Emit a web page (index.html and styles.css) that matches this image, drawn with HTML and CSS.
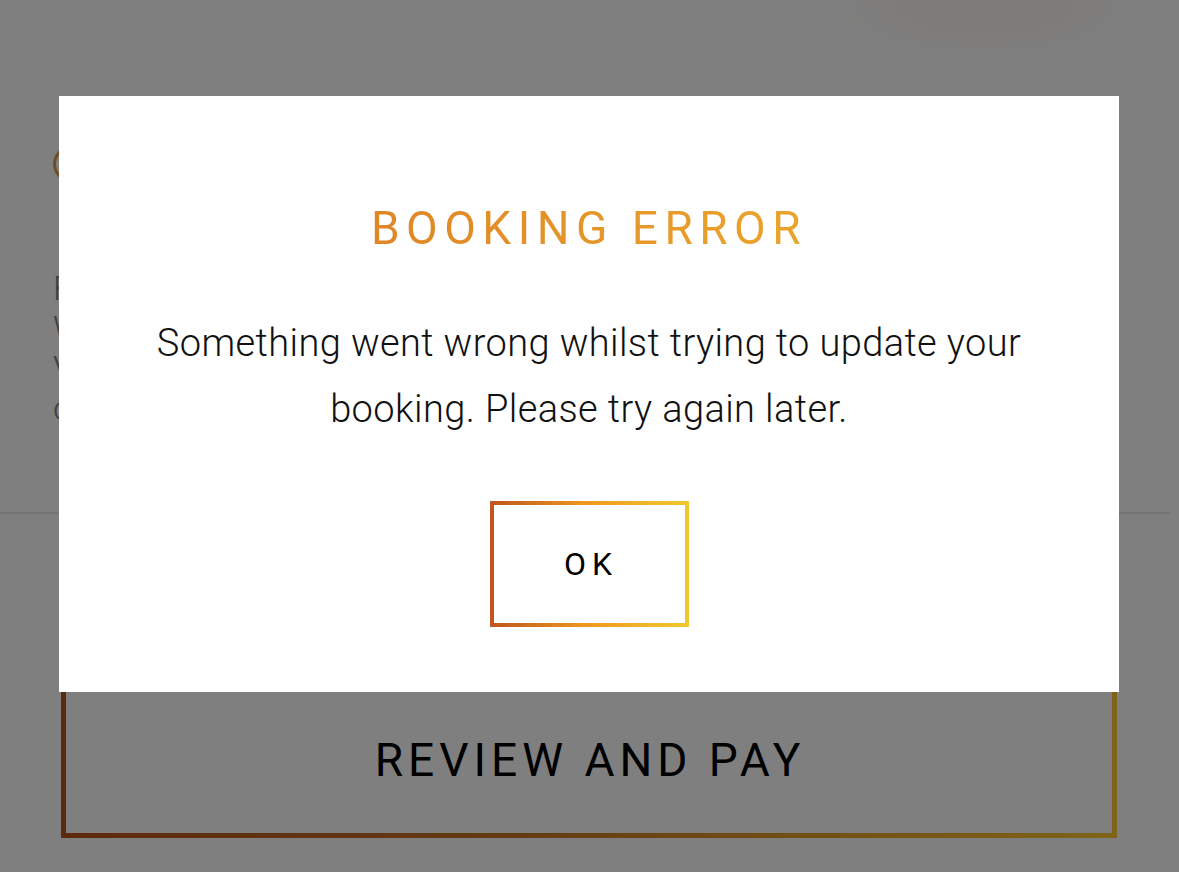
FILE: index.html
```html
<!DOCTYPE html>
<html lang="en">
<head>
  <meta charset="utf-8">
  <meta name="viewport" content="width=device-width">
  <title>Booking</title>
  <link rel="stylesheet" href="styles.css">
</head>
<body>
  <div class="page">
    <div class="blob"></div>
    <div class="page-head">
      <span class="dot"></span>
    </div>
    <p class="page-text">
      For changes to your booking please contact our team directly<br>
      We will be happy to help you with anything you need<br>
      View your booking details below and please review them,<br>
      cancellation terms apply to all bookings made here.
    </p>
    <hr class="divider">
    <button class="pay-btn">REVIEW AND PAY</button>
  </div>

  <div class="overlay">
    <div class="modal">
      <h2 class="modal-title">BOOKING ERROR</h2>
      <p class="modal-text">Something went wrong whilst trying to update your booking. Please try again later.</p>
      <button class="ok-btn">OK</button>
    </div>
  </div>
</body>
</html>
```

FILE: styles.css
```css
* {
  box-sizing: border-box;
}

body {
  margin: 0;
  padding: 0;
  background: #ffffff;
  font-family: Roboto, "Liberation Sans", sans-serif;
  overflow: hidden;
}

.page {
  position: relative;
  height: 872px;
  padding: 0 61px 0 53px;
}

.blob {
  position: absolute;
  top: -60px;
  left: 800px;
  width: 370px;
  height: 130px;
  border-radius: 50%;
  background: radial-gradient(ellipse at center, rgba(250, 244, 240, 1) 0%, rgba(255, 255, 255, 0) 70%);
}

.page-head {
  height: 268px;
  padding-top: 146px;
}

.dot {
  display: block;
  width: 36px;
  height: 36px;
  border-radius: 50%;
  border: 3px solid #e29a4a;
}

.page-text {
  margin: 0;
  font-size: 34px;
  font-weight: 300;
  line-height: 40px;
  color: #808080;
  width: 1100px;
  white-space: nowrap;
}

.divider {
  border: 0;
  border-top: 2px solid #e6e6e6;
  margin: 84px -53px 0;
}

.pay-btn {
  display: block;
  width: 1056px;
  height: 160px;
  margin: 164px 0 0 8px;
  background: #ffffff;
  border: 5px solid;
  border-image: linear-gradient(90deg, #bc541c, #c9731e 40%, #fec830) 1;
  font-family: Roboto, "Liberation Sans", sans-serif;
  font-size: 46px;
  letter-spacing: 5px;
  color: #000000;
  padding: 4px 0 0 2px;
}

.overlay {
  position: fixed;
  top: 0;
  left: 0;
  right: 0;
  bottom: 0;
  background: rgba(0, 0, 0, 0.5);
}

.modal {
  margin: 96px 0 0 59px;
  width: 1060px;
  height: 596px;
  background: #ffffff;
  text-align: center;
  padding-top: 104px;
}

.modal-title {
  margin: 0;
  font-size: 46px;
  font-weight: 400;
  line-height: 56px;
  letter-spacing: 6.5px;
  padding-left: 0;
  background: linear-gradient(90deg, #df8626, #eaa52c);
  -webkit-background-clip: text;
  background-clip: text;
  color: transparent;
  display: inline-block;
}

.modal-text {
  margin: 54px auto 0;
  width: 940px;
  font-size: 38px;
  font-weight: 300;
  letter-spacing: 0.4px;
  line-height: 66px;
  color: #111111;
}

.ok-btn {
  display: block;
  margin: 59px auto 0;
  width: 199px;
  height: 126px;
  background: #ffffff;
  border: 4px solid;
  border-image: linear-gradient(90deg, #c0561e, #ef9a20 50%, #f0c82c) 1;
  font-family: Roboto, "Liberation Sans", sans-serif;
  font-size: 32px;
  letter-spacing: 6px;
  color: #000000;
  padding: 0 0 0 4px;
}
```
